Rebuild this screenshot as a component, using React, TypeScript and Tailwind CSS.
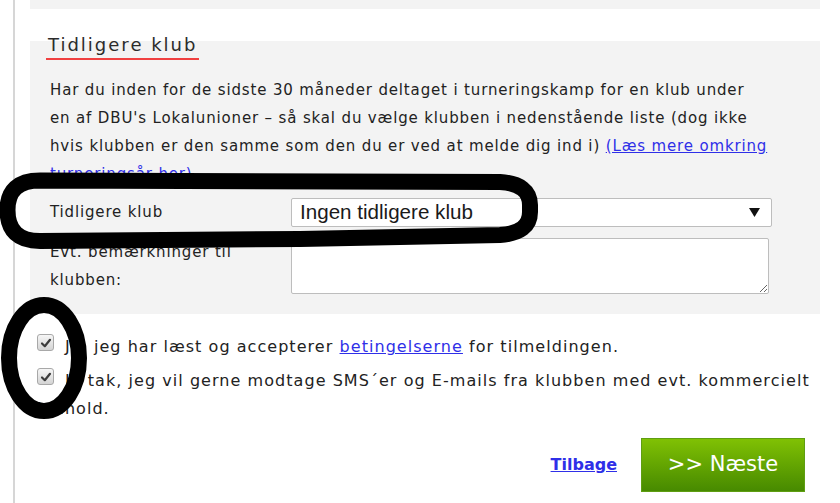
import React from "react";

function Check() {
  return (
    <div className="w-[17px] h-[17px] shrink-0 rounded-[3px] border border-[#a8a8a8] bg-gradient-to-b from-[#f6f6f6] to-[#d4d4d4] flex items-center justify-center">
      <svg width="12" height="12" viewBox="0 0 12 12">
        <path d="M2 6.5 L4.8 9.2 L10 2.8" fill="none" stroke="#3c3c3c" strokeWidth="2.2" strokeLinecap="round" strokeLinejoin="round" />
      </svg>
    </div>
  );
}

export default function App() {
  return (
    <div className="relative w-[840px] h-[503px] overflow-hidden bg-white flex font-['DejaVu_Sans',sans-serif] text-[#222]">
      <div className="w-[13px] shrink-0" />
      <div className="w-[2px] shrink-0 bg-[#d6d6d6]" />
      <div className="w-[15px] shrink-0" />
      <div className="w-[790px] shrink-0 flex flex-col">
        <div className="h-[9px] bg-[#f3f3f3]" />
        <div className="h-[32px]" />
        <div className="flex flex-col bg-[#f3f3f3] pl-[20px] h-[273px]">
          <h2 className="self-start -mt-[7px] -ml-[4px] px-[2px] pb-[2px] text-[18px] leading-[22px] tracking-[2px] border-b-2 border-[#f04040] text-[#2b2b2b]">
            Tidligere klub
          </h2>
          <p className="mt-[16px] text-[15px] leading-[28px] tracking-[0.85px] whitespace-nowrap">
            Har du inden for de sidste 30 måneder deltaget i turneringskamp for en klub under
            <br />
            en af DBU's Lokalunioner – så skal du vælge klubben i nedenstående liste (dog ikke
            <br />
            hvis klubben er den samme som den du er ved at melde dig ind i){" "}
            <a className="text-[#2f2fe8] underline">(Læs mere omkring</a>
            <br />
            <a className="text-[#2f2fe8] underline">turneringsår her)</a>
          </p>
          <div className="mt-[10px] flex items-center h-[29px]">
            <div className="w-[241px] text-[15px] tracking-[0.85px]">Tidligere klub</div>
            <div className="w-[481px] h-[29px] bg-white border border-[#bdbdbd] rounded-[2px] flex items-center justify-between pl-[8px] pr-[11px]">
              <span className="font-['Liberation_Sans',sans-serif] text-[20.6px] text-[#1a1a1a]">Ingen tidligere klub</span>
              <svg width="11" height="9" viewBox="0 0 11 9">
                <path d="M0 0 L11 0 L5.5 9 Z" fill="#111" />
              </svg>
            </div>
          </div>
          <div className="mt-[11px] flex items-start">
            <div className="w-[241px] text-[15px] leading-[28px] tracking-[0.85px]">
              Evt. bemærkninger til
              <br />
              klubben:
            </div>
            <textarea className="w-[478px] h-[56px] bg-white border border-[#bdbdbd] rounded-[2px] outline-none" />
          </div>
        </div>
        <div className="mt-[19px] pl-[7px] flex flex-col text-[16px] leading-[28px] tracking-[1.05px]">
          <div className="flex items-start">
            <div className="mt-[1px]">
              <Check />
            </div>
            <div className="ml-[11px] whitespace-nowrap">
              Ja, jeg har læst og accepterer{" "}
              <a className="text-[#2f2fe8] underline">betingelserne</a> for tilmeldingen.
            </div>
          </div>
          <div className="mt-[6px] flex flex-col">
            <div className="flex items-start">
              <div className="mt-[1px]">
                <Check />
              </div>
              <div className="ml-[11px] whitespace-nowrap">
                Ja tak, jeg vil gerne modtage SMS´er og E-mails fra klubben med evt. kommercielt
              </div>
            </div>
            <div className="whitespace-nowrap">indhold.</div>
          </div>
        </div>
        <div className="mt-[15px] flex items-center justify-end gap-[24px] pr-[15px]">
          <a className="text-[16px] font-bold text-[#2f2fe8] underline">Tilbage</a>
          <button className="w-[164px] h-[54px] bg-gradient-to-b from-[#80c104] to-[#478a00] border border-[#5f9e12] text-white text-[21px]">
            &gt;&gt; Næste
          </button>
        </div>
      </div>
      <svg className="absolute inset-0 pointer-events-none" width="840" height="503" viewBox="0 0 840 503">
        <path
          d="M40 180.5 L500 182 Q530 184 530 205 L530 212 Q530 233 500 235 L300 239 L40 241 Q7.5 241 7.5 210 Q7.5 180.5 40 180.5 Z"
          fill="none"
          stroke="#000"
          strokeWidth="16"
        />
        <ellipse cx="44" cy="358" rx="35" ry="53" fill="none" stroke="#000" strokeWidth="16" />
      </svg>
    </div>
  );
}
